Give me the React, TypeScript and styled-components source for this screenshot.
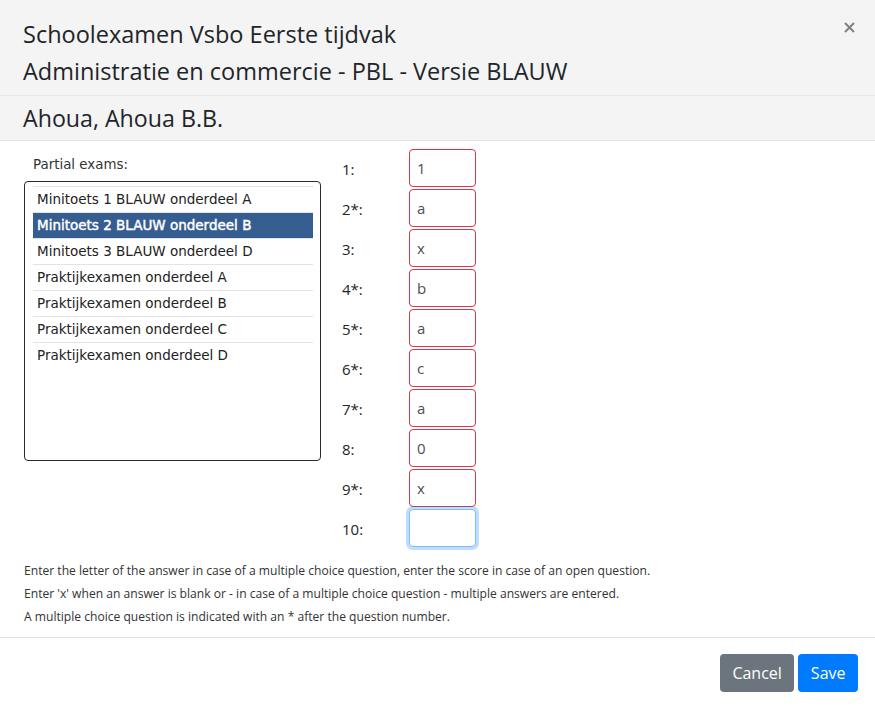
import React from "react";
import styled, { createGlobalStyle } from "styled-components";

const GlobalStyle = createGlobalStyle`
  html, body { margin: 0; padding: 0; background: #ffffff; }
  body { font-family: "Open Sans", "Liberation Sans", sans-serif; color: #212529; }
  * { box-sizing: border-box; }
`;

const Modal = styled.div`
  width: 875px;
  height: 708px;
  background: #ffffff;
  display: flex;
  flex-direction: column;
  overflow: hidden;
`;

const Header = styled.div`
  position: relative;
  background: #f4f4f4;
  padding: 16px 23px 5px;
  border-bottom: 1px solid #e6e6e6;
`;

const TitleLine = styled.div`
  font-family: "Open Sans", sans-serif;
  font-size: 23.5px;
  line-height: 37px;
  color: #212529;
  white-space: nowrap;
`;

const CloseButton = styled.button`
  position: absolute;
  top: 14px;
  right: 16px;
  border: none;
  background: transparent;
  padding: 0;
  width: 20px;
  height: 26px;
  cursor: pointer;
  display: flex;
  align-items: center;
  justify-content: center;
`;

const SubHeader = styled.div`
  background: #f4f4f4;
  padding: 4px 23px;
  border-bottom: 1px solid #e6e6e6;
  font-size: 23.2px;
  line-height: 36px;
  white-space: nowrap;
`;

const Body = styled.div`
  padding: 8px 24px 8px;
  display: flex;
  flex-direction: column;
`;

const Columns = styled.div`
  display: flex;
  align-items: flex-start;
`;

const LeftColumn = styled.div`
  width: 297px;
  padding-top: 6px;
  display: flex;
  flex-direction: column;
`;

const ListLabel = styled.div`
  font-family: "DejaVu Sans", sans-serif;
  font-size: 13.4px;
  line-height: 20px;
  color: #333;
  padding-left: 9px;
  margin-bottom: 6px;
`;

const ListBox = styled.div`
  height: 280px;
  border: 1px solid #2b2b2b;
  border-radius: 4px;
  padding: 4px 7px 4px 8px;
  background: #fff;
`;

const ListItem = styled.div<{ $selected?: boolean }>`
  font-family: "DejaVu Sans", sans-serif;
  font-size: 13.5px;
  height: 26px;
  line-height: 25px;
  padding-left: 4px;
  border-top: 1px solid #e3e3e3;
  background: ${(p) => (p.$selected ? "#365d8f" : "transparent")};
  color: ${(p) => (p.$selected ? "#ffffff" : "#222")};
  -webkit-text-stroke: ${(p) => (p.$selected ? "0.45px #ffffff" : "0")};
  white-space: nowrap;
`;

const AnswerGrid = styled.div`
  margin-left: 21px;
  display: grid;
  grid-template-columns: 67px 67px;
  grid-auto-rows: 38px;
  row-gap: 2px;
`;

const QuestionLabel = styled.label`
  font-size: 15px;
  color: #212529;
  display: flex;
  align-items: center;
  padding-top: 2px;
`;

const AnswerInput = styled.input<{ $focused?: boolean }>`
  width: 67px;
  height: 38px;
  border: 1px solid ${(p) => (p.$focused ? "#80bdff" : "#dc3545")};
  border-radius: 4px;
  padding: 0 7px;
  font-family: "Open Sans", sans-serif;
  font-size: 15px;
  color: #495057;
  outline: none;
  box-shadow: ${(p) => (p.$focused ? "0 0 0 3px rgba(0,123,255,0.25)" : "none")};
  background: #fff;
`;

const HelpText = styled.div`
  margin-top: 12px;
  font-size: 12.1px;
  line-height: 23px;
  color: #333;
  white-space: nowrap;
`;

const Footer = styled.div`
  border-top: 1px solid #e0e0e0;
  padding: 16px 17px 16px;
  display: flex;
  justify-content: flex-end;
  gap: 4px;
  margin-top: auto;
`;

const Button = styled.button<{ $variant: "secondary" | "primary" }>`
  height: 38px;
  padding: 0 12.5px;
  border: none;
  border-radius: 4px;
  font-family: "Open Sans", sans-serif;
  font-size: 16px;
  color: #fff;
  background: ${(p) => (p.$variant === "primary" ? "#007bff" : "#6c757d")};
  cursor: pointer;
`;

const exams = [
  "Minitoets 1 BLAUW onderdeel A",
  "Minitoets 2 BLAUW onderdeel B",
  "Minitoets 3 BLAUW onderdeel D",
  "Praktijkexamen onderdeel A",
  "Praktijkexamen onderdeel B",
  "Praktijkexamen onderdeel C",
  "Praktijkexamen onderdeel D",
];

const answers: { label: string; value: string }[] = [
  { label: "1:", value: "1" },
  { label: "2*:", value: "a" },
  { label: "3:", value: "x" },
  { label: "4*:", value: "b" },
  { label: "5*:", value: "a" },
  { label: "6*:", value: "c" },
  { label: "7*:", value: "a" },
  { label: "8:", value: "0" },
  { label: "9*:", value: "x" },
  { label: "10:", value: "" },
];

export default function App() {
  return (
    <>
      <GlobalStyle />
      <Modal>
        <Header>
          <TitleLine>Schoolexamen Vsbo Eerste tijdvak</TitleLine>
          <TitleLine>Administratie en commercie - PBL - Versie BLAUW</TitleLine>
          <CloseButton aria-label="Close">
            <svg width="11" height="11" viewBox="0 0 11 11">
              <path d="M1 1 L10 10 M10 1 L1 10" stroke="#808080" strokeWidth="2" />
            </svg>
          </CloseButton>
        </Header>
        <SubHeader>Ahoua, Ahoua B.B.</SubHeader>
        <Body>
          <Columns>
            <LeftColumn>
              <ListLabel>Partial exams:</ListLabel>
              <ListBox>
                {exams.map((e, i) => (
                  <ListItem key={e} $selected={i === 1}>
                    {e}
                  </ListItem>
                ))}
              </ListBox>
            </LeftColumn>
            <AnswerGrid>
              {answers.map((a, i) => (
                <React.Fragment key={a.label}>
                  <QuestionLabel>{a.label}</QuestionLabel>
                  <AnswerInput
                    defaultValue={a.value}
                    $focused={i === answers.length - 1}
                  />
                </React.Fragment>
              ))}
            </AnswerGrid>
          </Columns>
          <HelpText>
            <div>
              Enter the letter of the answer in case of a multiple choice question, enter the score in case of an open question.
            </div>
            <div>
              Enter 'x' when an answer is blank or - in case of a multiple choice question - multiple answers are entered.
            </div>
            <div>A multiple choice question is indicated with an * after the question number.</div>
          </HelpText>
        </Body>
        <Footer>
          <Button $variant="secondary">Cancel</Button>
          <Button $variant="primary">Save</Button>
        </Footer>
      </Modal>
    </>
  );
}
